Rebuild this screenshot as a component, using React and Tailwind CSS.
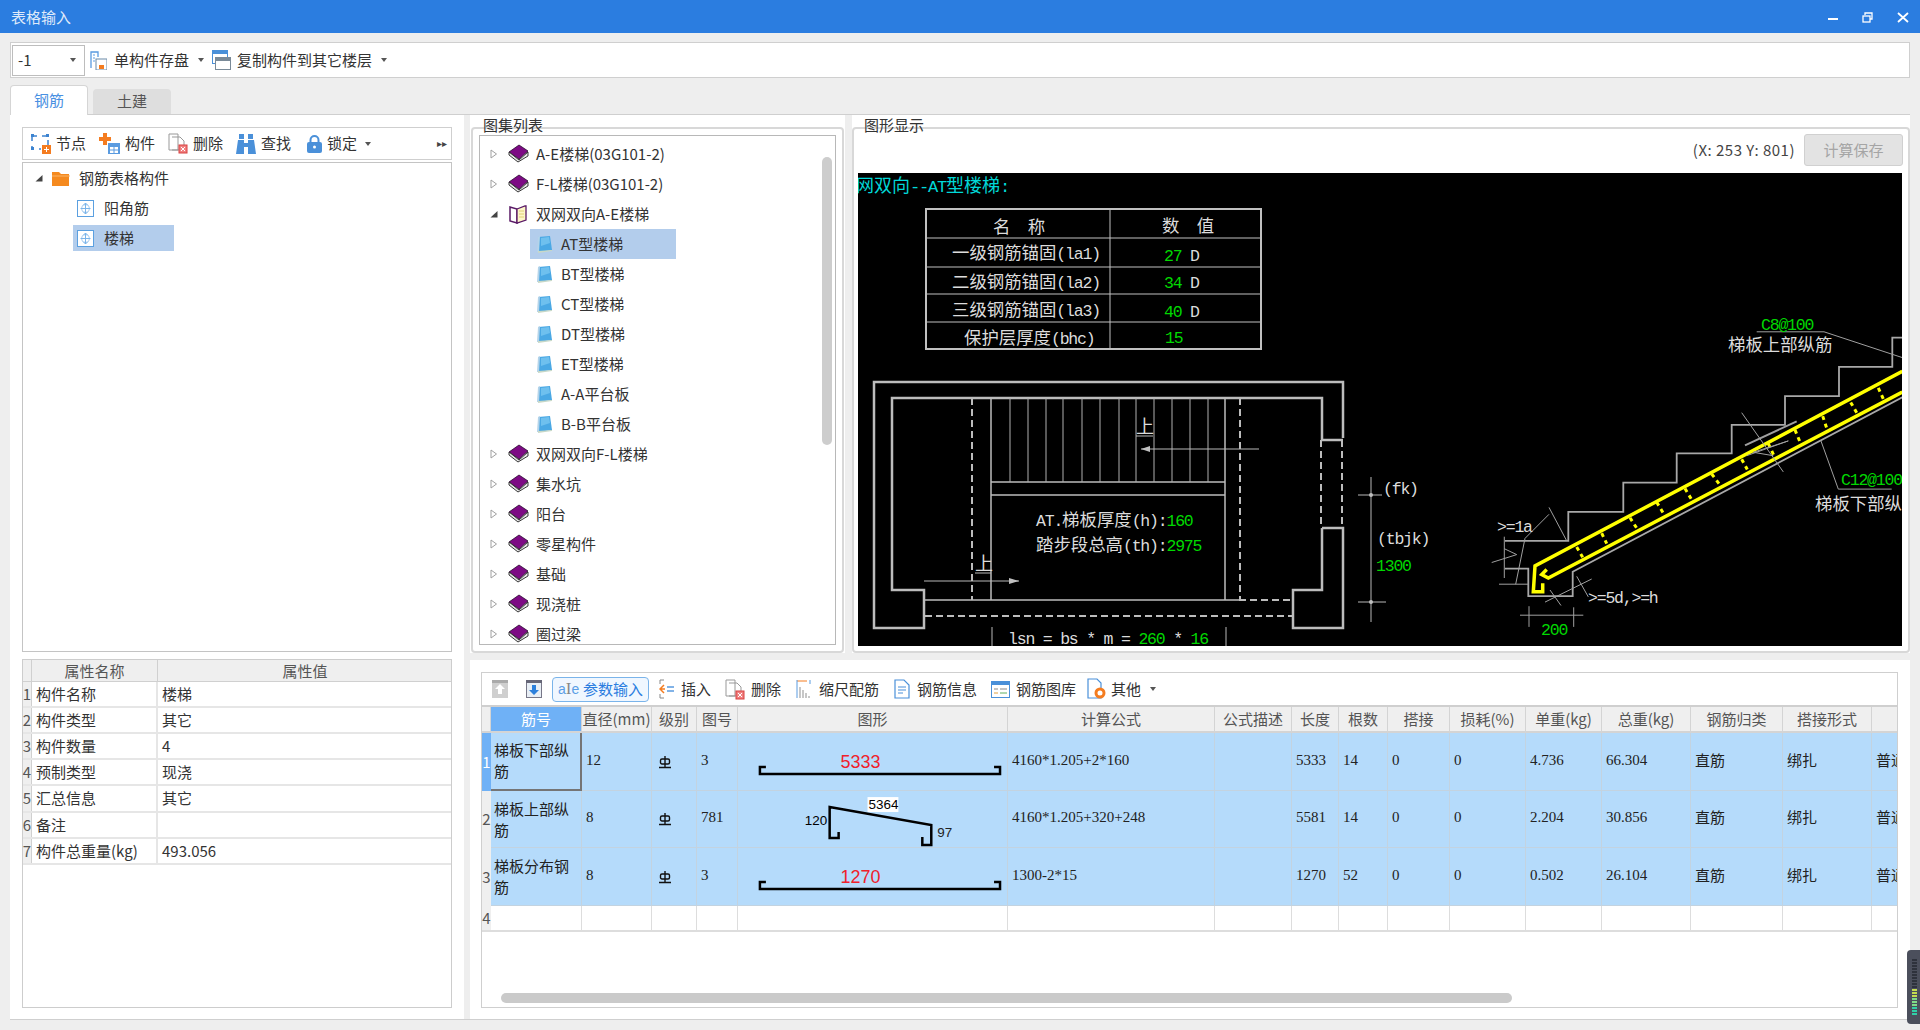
import React from 'react';

const Caret = ({ className = '' }) => (
  <span className={`w-0 h-0 border-x-[3px] border-x-transparent border-t-[4px] border-t-[#555] ${className}`} />
);

/* ---------- icons ---------- */
const ArrowClosed = () => (
  <svg width="8" height="10" viewBox="0 0 8 10"><path d="M1 1l5.5 4L1 9z" fill="#fff" stroke="#a0a0a0" /></svg>
);
const ArrowOpen = () => (
  <svg width="8" height="8" viewBox="0 0 8 8"><path d="M7.5 1v6.5H.5z" fill="#444" /></svg>
);
const Book = () => (
  <svg width="21" height="20" viewBox="0 0 21 20">
    <path d="M1 8l10-7 9 6-9 8z" fill="#7d0a84" stroke="#2a0a30" strokeWidth=".8" />
    <path d="M1 8v3l9 7 10-6V8l-9 8z" fill="#e8e8e8" stroke="#222" strokeWidth=".9" />
  </svg>
);
const OpenBook = () => (
  <svg width="21" height="21" viewBox="0 0 21 21">
    <path d="M2 3v14l7 2V5z" fill="#fff" stroke="#5a1a66" strokeWidth="1.5" />
    <path d="M9 5l8-3h1v14l-9 3z" fill="#fdf6c8" stroke="#5a1a66" strokeWidth="1.3" />
    <path d="M11 7h5M11 10h5M11 13h5" stroke="#d8c860" strokeWidth=".8" />
  </svg>
);
const Sheet = () => (
  <svg width="17" height="19" viewBox="0 0 17 19">
    <path d="M2 2l12-1 2 14-14 2z" fill="#4aa8e4" />
    <path d="M5 3l8-1 1 6-9 3z" fill="#6fc0ee" />
    <path d="M2 2l2-1-1 16H1z" fill="#b4d4ea" />
    <path d="M2 16l14-1v1L2 18z" fill="#c8d8c8" />
  </svg>
);
const Elem = () => (
  <svg width="17" height="17" viewBox="0 0 17 17" fill="none">
    <rect x=".5" y=".5" width="16" height="16" fill="#fff" stroke="#5ba0e0" />
    <circle cx="8.5" cy="8.5" r="4" stroke="#a8cdf0" />
    <path d="M8.5 3v11M3.5 8.5h10M6.5 5l2-2 2 2M6.5 12l2 2 2-2" stroke="#7ab4ea" />
  </svg>
);
const Folder = () => (
  <svg width="18" height="15" viewBox="0 0 18 15"><path d="M0 1h7l2 2h8v12H0z" fill="#f58a1f" /><path d="M0 5h18" stroke="#fbb66a" /></svg>
);
const IconNode = () => (
  <svg width="20" height="20" viewBox="0 0 20 20" fill="none">
    <path d="M1 2h16v9M1 2v13h9" stroke="#3c83d0" strokeWidth="1.5" strokeDasharray="5 5" />
    <rect x="0" y="0" width="3" height="3" fill="#3c83d0" /><rect x="15" y="0" width="3" height="3" fill="#3c83d0" /><rect x="0" y="13" width="3" height="3" fill="#3c83d0" />
    <rect x="11" y="11" width="9" height="9" fill="#f47c20" />
    <path d="M15.5 13v5M13 15.5h5" stroke="#fff" />
  </svg>
);
const IconComp = () => (
  <svg width="21" height="21" viewBox="0 0 21 21">
    <path d="M4 0h4v4h4v4H8v4H4V8H0V4h4z" fill="#f47c20" />
    <rect x="9" y="10" width="12" height="11" fill="#5a9be0" />
    <rect x="11" y="14" width="8" height="6" fill="#fff" />
    <path d="M15 14v6M11 17h8" stroke="#5a9be0" />
  </svg>
);
const IconDel = () => (
  <svg width="20" height="21" viewBox="0 0 20 21" fill="none">
    <path d="M1 1h9v16H1zM4 4h8l4 4v9H4" stroke="#999" fill="#fff" />
    <rect x="11" y="12" width="8" height="8" fill="#f08080" stroke="#d84040" />
    <path d="M13 14l4 4M17 14l-4 4" stroke="#fff" />
  </svg>
);
const IconFind = () => (
  <svg width="20" height="20" viewBox="0 0 20 20" fill="#4a90d9">
    <rect x="3" y="0" width="5" height="5" /><rect x="12" y="0" width="5" height="5" />
    <path d="M2 6h6v3h4V6h6l2 14h-8v-7H8v7H0z" />
  </svg>
);
const IconLock = () => (
  <svg width="15" height="18" viewBox="0 0 15 18" fill="none">
    <path d="M3.5 8V5a4 4 0 018 0v3" stroke="#4a90d9" strokeWidth="2" />
    <rect x="0" y="7" width="15" height="11" rx="2" fill="#4a90d9" />
    <circle cx="7.5" cy="12" r="1.5" fill="#fff" />
  </svg>
);
const IconSave = () => (
  <svg width="17" height="19" viewBox="0 0 17 19" fill="none">
    <path d="M1 17V1h7v5" stroke="#5a9be0" strokeWidth="1.3" />
    <path d="M3 4h2M3 7h2M3 10h2" stroke="#5a9be0" />
    <rect x="6" y="8" width="11" height="11" fill="#fff" stroke="#6a8aa8" />
    <rect x="9" y="14" width="5" height="4" fill="#f47c20" />
  </svg>
);
const IconCopy = () => (
  <svg width="19" height="20" viewBox="0 0 19 20" fill="none">
    <rect x=".5" y=".5" width="15" height="13" fill="#fff" stroke="#4a90d9" />
    <rect x="0" y="0" width="16" height="4" fill="#4a90d9" />
    <rect x="3.5" y="7.5" width="15" height="12" fill="#fff" stroke="#7a8a98" />
    <rect x="3" y="7" width="16" height="4" fill="#7a8a98" />
  </svg>
);
const IconUp = () => (
  <svg width="16" height="18" viewBox="0 0 16 18">
    <rect width="16" height="18" fill="#cfcfcf" /><rect x="0" y="0" width="16" height="3" fill="#aaa" />
    <path d="M8 4l5 5h-3v5H6V9H3z" fill="#fff" />
  </svg>
);
const IconDown = () => (
  <svg width="16" height="18" viewBox="0 0 16 18">
    <rect x=".5" y=".5" width="15" height="17" fill="#e8eef5" stroke="#778" /><rect x="0" y="0" width="16" height="3" fill="#667" />
    <path d="M8 15l5-5h-3V5H6v5H3z" fill="#2c80dc" />
  </svg>
);
const IconInsert = () => (
  <svg width="16" height="20" viewBox="0 0 16 20" fill="none">
    <path d="M1 1h4M1 1v4M1 15v4h4" stroke="#888" />
    <path d="M1 10h5M5 6l-4 4 4 4" stroke="#f47c20" strokeWidth="1.5" />
    <path d="M8 8h7M8 12h7" stroke="#5a9be0" strokeWidth="1.5" />
  </svg>
);
const IconScale = () => (
  <svg width="16" height="20" viewBox="0 0 16 20" fill="none">
    <path d="M1 2h10" stroke="#f47c20" /><path d="M14 1v4M1 1v18" stroke="#5a9be0" />
    <path d="M4 8v11M7 11v8M10 14v5M13 17v2" stroke="#aaa" strokeWidth="1.3" />
  </svg>
);
const IconInfo = () => (
  <svg width="16" height="20" viewBox="0 0 16 20" fill="#fff" stroke="#4a90d9" strokeWidth="1.2">
    <path d="M1 1h9l5 5v13H1z" /><path d="M4 8h8M4 11h8M4 14h5" />
  </svg>
);
const IconLib = () => (
  <svg width="19" height="17" viewBox="0 0 19 17" fill="none">
    <rect x=".5" y=".5" width="18" height="16" fill="#fff" stroke="#4a90d9" />
    <rect x="0" y="0" width="19" height="4" fill="#4a90d9" />
    <path d="M3 8h4M9 8h7" stroke="#888" /><path d="M3 12h4" stroke="#e0a040" /><path d="M9 12h7" stroke="#60b060" />
  </svg>
);
const IconOther = () => (
  <svg width="19" height="22" viewBox="0 0 19 22" fill="none">
    <path d="M1 1h9l4 4v15H1z" fill="#fff" stroke="#4a90d9" strokeWidth="1.2" />
    <circle cx="13" cy="15" r="4" fill="#fff" stroke="#f47c20" strokeWidth="3" />
  </svg>
);
const IconAie = () => (
  <span className="flex items-center shrink-0 text-[14px] leading-none text-[#5b9ee6] font-['Liberation_Sans',sans-serif]">a<span className="text-[#888] text-[17px] -mt-[1px] font-['Liberation_Serif',serif]">I</span>e</span>
);
const LevelMark = () => (
  <svg width="12" height="13" viewBox="0 0 12 13" fill="none" stroke="#111" strokeWidth="1.4">
    <rect x="1.5" y="3" width="9" height="5" rx="1.5" /><path d="M6 0v11M0 11.5h12" />
  </svg>
);

/* ---------- tree data ---------- */
const bookRows = [
  ['A-E楼梯(03G101-2)', 'book'],
  ['F-L楼梯(03G101-2)', 'book'],
  ['双网双向A-E楼梯', 'open'],
  ['AT型楼梯', 'leaf', true],
  ['BT型楼梯', 'leaf'],
  ['CT型楼梯', 'leaf'],
  ['DT型楼梯', 'leaf'],
  ['ET型楼梯', 'leaf'],
  ['A-A平台板', 'leaf'],
  ['B-B平台板', 'leaf'],
  ['双网双向F-L楼梯', 'book'],
  ['集水坑', 'book'],
  ['阳台', 'book'],
  ['零星构件', 'book'],
  ['基础', 'book'],
  ['现浇桩', 'book'],
  ['圈过梁', 'book'],
];

const propRows = [
  ['构件名称', '楼梯'],
  ['构件类型', '其它'],
  ['构件数量', '4'],
  ['预制类型', '现浇'],
  ['汇总信息', '其它'],
  ['备注', ''],
  ['构件总重量(kg)', '493.056'],
];

const gridCols = 'grid grid-cols-[9px_91px_70px_45px_41px_270px_207px_77px_47px_49px_62px_76px_76px_89px_92px_89px_26px]';
const headers = ['筋号', '直径(mm)', '级别', '图号', '图形', '计算公式', '公式描述', '长度', '根数', '搭接', '损耗(%)', '单重(kg)', '总重(kg)', '钢筋归类', '搭接形式', ''];
const bars = [
  { no: '1', name: '梯板下部纵筋', dia: '12', fig: '3', shape: 'flat', len: '5333', formula: '4160*1.205+2*160', l: '5333', n: '14', unit: '4.736', total: '66.304' },
  { no: '2', name: '梯板上部纵筋', dia: '8', fig: '781', shape: 'bent', formula: '4160*1.205+320+248', l: '5581', n: '14', unit: '2.204', total: '30.856' },
  { no: '3', name: '梯板分布钢筋', dia: '8', fig: '3', shape: 'flat', len: '1270', formula: '1300-2*15', l: '1270', n: '52', unit: '0.502', total: '26.104' },
];

const FlatBar = ({ value }) => (
  <svg className="w-full h-[58px]" viewBox="0 0 270 58">
    <path d="M28 34h-6v7h241v-7h-6" fill="none" stroke="#000" strokeWidth="2.5" />
    <text x="123" y="35" textAnchor="middle" fontSize="18" fill="#f0202a" fontFamily="Liberation Sans">{value}</text>
  </svg>
);
const BentBar = () => (
  <svg className="w-full h-[57px]" viewBox="0 0 270 57">
    <path d="M101 41v6h-9V16l102 18v20h-9v-8" fill="none" stroke="#000" strokeWidth="2.5" />
    <rect x="130" y="6" width="31" height="15" fill="#fff" />
    <text x="131" y="18" fontSize="13.5" fill="#000" fontFamily="Liberation Sans">5364</text>
    <text x="67" y="34" fontSize="13.5" fill="#000" fontFamily="Liberation Sans">120</text>
    <text x="200" y="46" fontSize="13.5" fill="#222" fontFamily="Liberation Sans">97</text>
  </svg>
);

/* ---------- cad drawing ---------- */
const CadText = ({ x, y, size = 17.4, parts }) => (
  <text x={x} y={y + size * 0.36} className="whitespace-pre">
    {parts.flatMap(([str, color], i) =>
      str.split(/([\x20-\x7e]+)/).filter(Boolean).map((run, j) => {
        const ascii = /^[\x20-\x7e]+$/.test(run);
        return (
          <tspan
            key={`${i}-${j}`}
            fill={color}
            fontSize={ascii ? size * 0.95 : size}
            letterSpacing={ascii ? size * -0.07 : 0}
            fontFamily={ascii ? 'Liberation Mono' : 'Noto Sans CJK SC'}
          >
            {run}
          </tspan>
        );
      })
    )}
  </text>
);

const W = '#dcdcdc';
const G = '#00d800';
const sp = (list) => list.map(([x, y]) => `${(1400 + x / 3).toFixed(1)},${(120 + y / 2.904).toFixed(1)}`).join(' ');
const treadLines = [1010, 1028, 1046, 1063, 1082, 1100, 1119, 1136, 1154, 1172, 1190, 1208];
const stirrups = [[530, 1240, 548, 1270], [605, 1200, 620, 1230], [690, 1155, 712, 1188], [770, 1110, 792, 1145], [855, 1070, 875, 1103], [935, 1028, 960, 1060], [1025, 985, 1042, 1015], [1105, 940, 1122, 975], [1185, 900, 1200, 935], [1268, 860, 1282, 900], [1352, 820, 1370, 850], [1435, 778, 1450, 810]];

const CadCanvas = () => (
  <svg className="w-[1044px] h-[473px] bg-black block" viewBox="858 173 1044 473">
    <CadText x={856} y={186} size={18} parts={[['网双向--AT型楼梯:', '#00d8d8']]} />
    {/* table */}
    <rect x="926" y="209" width="335" height="140" fill="none" stroke="#c0c0c0" strokeWidth="2" />
    <path d="M1110 209v140M926 238h335M926 267h335M926 294h335M926 322h335" stroke="#c0c0c0" />
    <CadText x={993} y={227} parts={[['名  称', W]]} />
    <CadText x={1162} y={226} parts={[['数  值', W]]} />
    <CadText x={952} y={253} parts={[['一级钢筋锚固(la1)', W]]} />
    <CadText x={952} y={282} parts={[['二级钢筋锚固(la2)', W]]} />
    <CadText x={952} y={310} parts={[['三级钢筋锚固(la3)', W]]} />
    <CadText x={964} y={338} parts={[['保护层厚度(bhc)', W]]} />
    <CadText x={1164} y={255} parts={[['27', G], [' D', W]]} />
    <CadText x={1164} y={282} parts={[['34', G], [' D', W]]} />
    <CadText x={1164} y={311} parts={[['40', G], [' D', W]]} />
    <CadText x={1165} y={337} parts={[['15', G]]} />
    {/* plan */}
    <g fill="none" stroke="#bcbcbc" strokeWidth="2.5">
      <path d="M1343 438V382H874V628H924V590H892V398H1322V440H1343" />
      <path d="M1322 528H1343V628H1293V590H1322V528" />
    </g>
    <g fill="none" stroke="#bcbcbc" strokeWidth="2" strokeDasharray="7 4">
      <path d="M1321 440V528M1342 440V528M972 398V600M1240 398V600M1239 600H1292M925 616H1293" />
    </g>
    <g fill="none" stroke="#bcbcbc" strokeWidth="1.5">
      <path d="M991 398V600M1225 398V600M924 600H1240M991 482H1225M991 495H1225" />
    </g>
    <path d={treadLines.map((x) => `M${x} 398V482`).join('')} stroke="#b0b0b0" />
    <CadText x={1136} y={427} size={18} parts={[['上', W]]} />
    <path d="M1136 436h17M1141 449H1259M975 573h16M924 581H1019" stroke="#b8b8b8" />
    <path d="M1141 449l9-3v6zM1019 581l-10-3v6z" fill="#c0c0c0" />
    <CadText x={975} y={564} size={18} parts={[['上', W]]} />
    <CadText x={1036} y={520} parts={[['AT.梯板厚度(h):', W], ['160', G]]} />
    <CadText x={1036} y={545} parts={[['踏步段总高(th):', W], ['2975', G]]} />
    <path d="M1371 477V622M1358 495H1382M1358 602H1386" stroke="#b8b8b8" />
    <circle cx="1371" cy="495" r="2" fill="#c0c0c0" /><circle cx="1371" cy="602" r="2" fill="#c0c0c0" />
    <CadText x={1383} y={488} parts={[['(fk)', W]]} />
    <CadText x={1377} y={538} parts={[['(tbjk)', W]]} />
    <CadText x={1376} y={565} parts={[['1300', G]]} />
    <path d="M992 627V646M1226 627V646" stroke="#b8b8b8" />
    <CadText x={1008} y={638} parts={[['lsn = bs * m = ', W], ['260', G], [' * ', W], ['16', G]]} />
    {/* section */}
    <polyline fill="none" stroke="#a8a8a8" strokeWidth="1.8" points={sp([[1507, 632], [1477, 632], [1477, 717], [1317, 717], [1317, 802], [1155, 802], [1155, 885], [995, 885], [995, 968], [830, 968], [830, 1053], [670, 1053], [670, 1138], [505, 1138], [505, 1222], [315, 1222]])} />
    <polyline fill="none" stroke="#a8a8a8" strokeWidth="1.8" points={sp([[315, 1303], [385, 1303], [385, 1383], [518, 1383], [518, 1312], [1507, 805]])} />
    <g fill="none" stroke="#ffff00" strokeWidth="3.5">
      <polyline points={sp([[1507, 730], [405, 1295], [400, 1370], [428, 1370], [428, 1345]])} />
      <polyline points={sp([[1507, 790], [445, 1330], [425, 1320], [440, 1305]])} />
    </g>
    {stirrups.map(([a, b, c, d]) => (
      <polyline key={a} points={sp([[a, b], [c, d]])} stroke="#ffff00" strokeWidth="3" strokeDasharray="4 4" />
    ))}
    <g fill="none" stroke="#a0a0a0">
      <polyline points={sp([[1070, 615], [1272, 615], [1507, 690]])} />
      <polyline points={sp([[1262, 930], [1315, 1072], [1475, 1072]])} />
      <polyline points={sp([[1025, 850], [1150, 1022]])} />
      <polyline points={sp([[1035, 945], [1190, 875]])} strokeWidth="2" />
      <polyline points={sp([[1040, 975], [1165, 932], [1060, 965], [1120, 975]])} />
      <polyline points={sp([[447, 1125], [500, 1222]])} />
      <polyline points={sp([[447, 1145], [375, 1215], [347, 1348]])} />
      <polyline points={sp([[297, 1348], [385, 1348]])} />
      <polyline points={sp([[313, 1210], [313, 1330]])} />
      <polyline points={sp([[275, 1285], [350, 1262], [313, 1245]])} />
      <polyline points={sp([[435, 1400], [575, 1333]])} />
      <polyline points={sp([[450, 1365], [483, 1410]])} />
      <polyline points={sp([[530, 1325], [565, 1385]])} />
      <polyline points={sp([[360, 1438], [550, 1438]])} />
      <polyline points={sp([[387, 1412], [387, 1472]])} />
      <polyline points={sp([[521, 1415], [521, 1472]])} />
    </g>
    <CadText x={1761} y={324} parts={[['C8@100', G]]} />
    <CadText x={1728} y={345} parts={[['梯板上部纵筋', W]]} />
    <CadText x={1841} y={479} parts={[['C12@100', G]]} />
    <CadText x={1815} y={504} parts={[['梯板下部纵', W]]} />
    <CadText x={1497} y={526} parts={[['>=1a', W]]} />
    <CadText x={1588} y={597} parts={[['>=5d,>=h', W]]} />
    <CadText x={1541} y={629} parts={[['200', G]]} />
  </svg>
);

/* ---------- page ---------- */
const ToolBtn = ({ icon, label, className = '' }) => (
  <div className={`flex items-center gap-[5px] ${className}`}>
    {icon}
    <span>{label}</span>
  </div>
);

const GroupLegend = ({ children }) => (
  <span className="absolute left-[10px] -top-[14px] text-[15px] leading-[20px] text-[#333]">{children}</span>
);

function Book2({ kind }) {
  return kind === 'open' ? <OpenBook /> : <Book />;
}

function Num({ v }) {
  return (
    <div className="flex items-center pl-[4px] pb-[4px] text-[15px] whitespace-nowrap border-r border-[#c3d3e0] font-['Liberation_Serif','Noto_Sans_CJK_SC',serif]">{v}</div>
  );
}

export default function App() {
  return (
    <div className="w-[1920px] h-[1030px] relative overflow-hidden flex flex-col bg-[#eeeeee] text-[15px] text-[#333] font-['Noto_Sans_CJK_SC','Noto_Sans',sans-serif]">
      {/* title bar */}
      <div className="h-[33px] shrink-0 flex items-center bg-[#2b7de0] pl-[11px] pr-[11px] pt-[1px] text-[#dfeafa]">
        <span>表格输入</span>
        <div className="ml-auto flex items-center gap-[24px]">
          <svg width="10" height="10" viewBox="0 0 10 10"><path d="M0 7h10" stroke="#fff" strokeWidth="2" /></svg>
          <svg width="11" height="11" viewBox="0 0 11 11" fill="none" stroke="#fff" strokeWidth="1.3"><path d="M3 3V1h7v6H8" /><rect x="1" y="4" width="7" height="6" /></svg>
          <svg width="12" height="11" viewBox="0 0 12 11" fill="none" stroke="#fff" strokeWidth="1.8"><path d="M1 1l10 9M11 1L1 10" /></svg>
        </div>
      </div>

      {/* top toolbar */}
      <div className="mt-[9px] mx-[10px] h-[36px] shrink-0 flex items-center bg-white border border-[#cfcfcf] pl-[1px]">
        <div className="w-[73px] h-[31px] flex items-center justify-between bg-white border border-[#bdbdbd] pl-[5px] pr-[8px]">
          <span>-1</span>
          <Caret />
        </div>
        <ToolBtn className="ml-[5px] gap-[7px]" icon={<IconSave />} label="单构件存盘" />
        <Caret className="ml-[9px]" />
        <ToolBtn className="ml-[8px] gap-[6px]" icon={<IconCopy />} label="复制构件到其它楼层" />
        <Caret className="ml-[9px]" />
      </div>

      {/* tabs */}
      <div className="mt-[7px] mx-[10px] h-[30px] shrink-0 flex items-end gap-[5px] border-b border-[#cfcfcf]">
        <div className="w-[78px] h-[30px] -mb-[1px] flex items-center justify-center bg-white border border-b-0 border-[#d5d5d5] rounded-t-[4px] text-[#4a90e2]">钢筋</div>
        <div className="w-[78px] h-[25px] flex items-center justify-center bg-[#dedede] rounded-t-[4px] text-[#555]">土建</div>
      </div>

      {/* main area */}
      <div className="ml-[10px] w-[1900px] h-[905px] shrink-0 flex gap-[6px] border-b border-[#cfcfcf]">
        {/* left column */}
        <div className="w-[454px] shrink-0 bg-white pt-[12px] px-[12px] flex flex-col">
          <div className="h-[33px] shrink-0 flex items-center gap-[13px] pl-[8px] bg-white border border-[#cfcfcf]">
            <ToolBtn icon={<IconNode />} label="节点" />
            <ToolBtn icon={<IconComp />} label="构件" />
            <ToolBtn icon={<IconDel />} label="删除" />
            <ToolBtn icon={<IconFind />} label="查找" />
            <ToolBtn className="ml-[3px]" icon={<IconLock />} label="锁定" />
            <Caret className="-ml-[5px]" />
            <span className="ml-auto mr-[4px] text-[10px] leading-none text-[#444] font-['Liberation_Sans',sans-serif]">▸▸</span>
          </div>
          <div className="mt-[2px] h-[490px] shrink-0 border border-[#c4c4c4]">
            <div className="h-[30px] flex items-center pl-[12px]">
              <ArrowOpen />
              <span className="ml-[9px]"><Folder /></span>
              <span className="ml-[9px]">钢筋表格构件</span>
            </div>
            <div className="h-[30px] flex items-center pl-[54px] gap-[10px]"><Elem /><span>阳角筋</span></div>
            <div className="h-[26px] mt-[2px] ml-[50px] w-[101px] flex items-center pl-[4px] gap-[10px] bg-[#b3cdec]"><Elem /><span>楼梯</span></div>
          </div>
          <div className="mt-[7px] h-[349px] shrink-0 border border-[#cdcdcd]">
            <div className="grid grid-cols-[9px_126px_294px] h-[22px] bg-[#efefef] text-[#555] border-b border-[#d0d0d0]">
              <div className="border-r border-[#d0d0d0]" />
              <div className="flex items-center justify-center pb-[1px] border-r border-[#d0d0d0]">属性名称</div>
              <div className="flex items-center justify-center pb-[1px]">属性值</div>
            </div>
            {propRows.map(([k, v], i) => (
              <div key={k} className={`grid grid-cols-[9px_126px_294px] border-b-2 border-[#e6e6e6] ${i === 4 ? 'h-[27px]' : 'h-[26px]'}`}>
                <div className="flex items-center justify-center bg-[#efefef] text-[#555] border-r border-[#d0d0d0]">{i + 1}</div>
                <div className="flex items-center pl-[4px] border-r-2 border-[#e6e6e6]">{k}</div>
                <div className="flex items-center pl-[4px]">{v}</div>
              </div>
            ))}
          </div>
        </div>

        {/* right column */}
        <div className="w-[1440px] shrink-0 flex flex-col gap-[7px]">
          <div className="h-[538px] shrink-0 flex gap-[7px]">
            {/* atlas list */}
            <div className="w-[375px] shrink-0 bg-white pt-[12px] pl-[1px] pr-[1px]">
              <div className="relative h-[526px] border-2 border-[#d8d8d8] rounded-[4px] px-[6px] pt-[6px]">
                <GroupLegend>图集列表</GroupLegend>
                <div className="relative h-[510px] border border-[#b8b8b8] overflow-hidden pt-[3px]">
                  {bookRows.map(([label, kind, selected]) =>
                    kind === 'leaf' ? (
                      <div key={label} className={`h-[30px] flex items-center ml-[50px] w-[146px] pl-[6px] gap-[8px] ${selected ? 'bg-[#b3cdec]' : ''}`}>
                        <Sheet />
                        <span>{label}</span>
                      </div>
                    ) : (
                      <div key={label} className="h-[30px] shrink-0 flex items-center pl-[10px]">
                        <span className="w-[8px] flex justify-center">{kind === 'open' ? <ArrowOpen /> : <ArrowClosed />}</span>
                        <span className="ml-[10px] w-[21px] flex"><Book2 kind={kind} /></span>
                        <span className="ml-[7px]">{label}</span>
                      </div>
                    )
                  )}
                  <div className="absolute left-[342px] top-[21px] w-[10px] h-[288px] rounded-[5px] bg-[#cdcdcd]" />
                </div>
              </div>
            </div>

            {/* drawing */}
            <div className="w-[1058px] shrink-0 bg-white pt-[12px]">
              <div className="relative h-[526px] border-2 border-[#d8d8d8] rounded-[4px] pl-[4px]">
                <GroupLegend>图形显示</GroupLegend>
                <div className="h-[44px] flex items-center justify-end pr-[5px] pb-[2px] gap-[9px]">
                  <span className="text-[#444] tracking-[0.5px]">(X: 253 Y: 801)</span>
                  <div className="w-[99px] h-[32px] flex items-center justify-center bg-[#e3e3e3] border border-[#d0d0d0] rounded-[3px] text-[#a5a5a5]">计算保存</div>
                </div>
                <CadCanvas />
              </div>
            </div>
          </div>

          {/* rebar table */}
          <div className="relative h-[359px] shrink-0 bg-white pl-[11px] pt-[12px]">
            <div className="relative w-[1417px] h-[336px] border border-[#cfcfcf] overflow-hidden">
              <div className="h-[34px] flex items-center border-b-2 border-[#cfcfcf]">
                <span className="ml-[10px]"><IconUp /></span>
                <span className="ml-[18px]"><IconDown /></span>
                <div className="ml-[10px] w-[97px] h-[25px] shrink-0 flex items-center justify-between pl-[5px] pr-[5px] whitespace-nowrap bg-[#f0f7ff] border border-[#7ab4ea] rounded-[4px] text-[#2b7de0]">
                  <IconAie />
                  <span>参数输入</span>
                </div>
                <ToolBtn className="ml-[10px] gap-[6px]" icon={<IconInsert />} label="插入" />
                <ToolBtn className="ml-[14px] gap-[6px]" icon={<IconDel />} label="删除" />
                <ToolBtn className="ml-[15px] gap-[7px]" icon={<IconScale />} label="缩尺配筋" />
                <ToolBtn className="ml-[15px] gap-[7px]" icon={<IconInfo />} label="钢筋信息" />
                <ToolBtn className="ml-[14px] gap-[6px]" icon={<IconLib />} label="钢筋图库" />
                <ToolBtn className="ml-[11px] gap-[4px]" icon={<IconOther />} label="其他" />
                <Caret className="ml-[9px]" />
              </div>
              <div className={`${gridCols} h-[26px] bg-[#efefef] text-[#555] border-b-2 border-[#d4d4d4]`}>
                <div className="border-r border-[#d4d4d4]" />
                {headers.map((h, i) => (
                  <div key={i} className={`flex items-center justify-center whitespace-nowrap border-r border-[#d4d4d4] ${i === 0 ? 'bg-[#6fb1f6] text-white' : ''}`}>{h}</div>
                ))}
              </div>
              {bars.map((b, i) => (
                <div key={b.no} className={`${gridCols} bg-[#b5dbfb] text-[#222] border-b border-[#c3d3e0] ${i === 1 ? 'h-[57px]' : 'h-[58px]'}`}>
                  <div className={`flex items-center justify-center text-[15px] ${i === 0 ? 'bg-[#6fb1f6] text-white' : 'bg-[#efefef] text-[#555]'}`}>{b.no}</div>
                  <div className={`flex items-center px-[3px] pb-[2px] leading-[21px] ${i === 0 ? 'border-2 border-l-0 border-t-0 border-[#757575]' : 'border-r border-[#c3d3e0]'}`}>{b.name}</div>
                  <Num v={b.dia} />
                  <div className="flex items-center pl-[7px] border-r border-[#c3d3e0]"><LevelMark /></div>
                  <Num v={b.fig} />
                  <div className="border-r border-[#c3d3e0]">{b.shape === 'flat' ? <FlatBar value={b.len} /> : <BentBar />}</div>
                  <Num v={b.formula} />
                  <Num v="" />
                  <Num v={b.l} />
                  <Num v={b.n} />
                  <Num v="0" />
                  <Num v="0" />
                  <Num v={b.unit} />
                  <Num v={b.total} />
                  <div className="flex items-center pl-[4px] pb-[4px] border-r border-[#c3d3e0]">直筋</div>
                  <div className="flex items-center pl-[4px] pb-[4px] border-r border-[#c3d3e0]">绑扎</div>
                  <div className="flex items-center pl-[4px] pb-[4px] overflow-hidden whitespace-nowrap">普通</div>
                </div>
              ))}
              <div className={`${gridCols} h-[26px] border-b-2 border-[#dddddd]`}>
                <div className="flex items-center justify-center bg-[#efefef] text-[#555]">4</div>
                {headers.map((h, i) => <div key={i} className="border-r border-[#dddddd]" />)}
              </div>
              <div className="absolute left-[19px] bottom-[4px] w-[1011px] h-[10px] rounded-[5px] bg-[#cacaca]" />
            </div>
          </div>
        </div>
      </div>

      {/* meter widget docked on the window edge */}
      <div className="absolute left-[1907px] top-[950px] w-[13px] h-[74px] rounded-l-[4px] bg-[#4b4f5c]">
        <svg className="w-full h-full" viewBox="0 0 13 74">
          {Array.from({ length: 19 }, (_, i) => {
            const color = i < 10 ? '#2e323c' : i < 13 ? '#c4dc50' : i < 16 ? '#80dc88' : '#30d0a8';
            return <rect key={i} x="5" y={9 + i * 3} width="5" height="2" fill={color} />;
          })}
        </svg>
      </div>
    </div>
  );
}
